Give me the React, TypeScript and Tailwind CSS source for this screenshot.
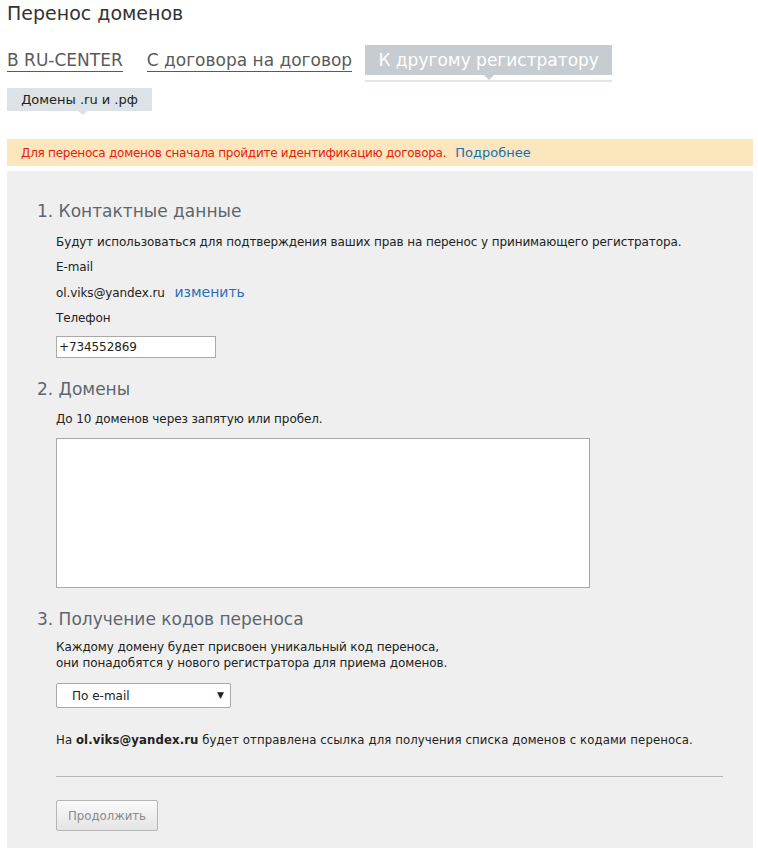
import React from "react";

export default function App() {
  const font = { fontFamily: '"DejaVu Sans", Verdana, sans-serif' };
  const cond = { fontFamily: '"DejaVu Sans Condensed", Tahoma, sans-serif' };
  return (
    <div className="min-h-[848px] bg-white text-[#222]" style={font}>
      <div className="pl-[7px] pr-[5px]">
        <h1 className="pt-[1px] text-[19px] leading-[24px] text-[#333]">Перенос доменов</h1>
        <div className="mt-[20px] flex items-start">
          <a className="mt-[5px] text-[17px] leading-[21px] text-[#5a5a5a] border-b border-[#5a5a5a]">В RU-CENTER</a>
          <a className="ml-[24px] mt-[5px] text-[17px] leading-[21px] text-[#5a5a5a] border-b border-[#5a5a5a]">С договора на договор</a>
          <div className="ml-[13px] flex flex-col">
            <div className="relative h-[30px] w-[247px] bg-[#c6ccd0] text-center text-[17px] leading-[30px] text-white">
              К другому регистратору
              <span className="absolute left-1/2 top-full -translate-x-1/2 h-0 w-0 border-x-[5px] border-t-[5px] border-x-transparent border-t-[#c6ccd0]" />
            </div>
            <div className="mt-[5px] h-[2px] w-[247px] bg-[#e1e6e8]" />
          </div>
        </div>
        <div className="relative mt-[6px] h-[23px] w-[145px] bg-[#dde2e6] text-center text-[13px] leading-[23px] text-[#222]">
          Домены .ru и .рф
          <span className="absolute left-[76px] top-full -translate-x-1/2 h-0 w-0 border-x-[5px] border-t-[4px] border-x-transparent border-t-[#dde2e6]" />
        </div>
        <div className="mt-[28px] h-[27px] bg-[#fbe6bd] pl-[14px] text-[12px] leading-[27px] text-[#e8200c]">
          <span className="tracking-[-0.25px]">Для переноса доменов сначала пройдите идентификацию договора.</span>
          <a className="ml-[9px] text-[13px] text-[#1570b8]">Подробнее</a>
        </div>
        <div className="mt-[5px] bg-[#efefef] pb-[20px] pl-[30px] pr-[30px] pt-[29px]">
          <h2 className="text-[17px] leading-[22px] text-[#5d6670]">1. Контактные данные</h2>
          <div className="pl-[19px] text-[12px] tracking-[-0.1px] text-[#222]">
            <p className="mt-[10px] leading-[20px]">Будут использоваться для подтверждения ваших прав на перенос у принимающего регистратора.</p>
            <p className="mt-[5px] leading-[20px]">E-mail</p>
            <p className="mt-[5px] leading-[20px]">
              ol.viks@yandex.ru <a className="ml-[6px] text-[14px] tracking-normal text-[#2a6fb5]">изменить</a>
            </p>
            <p className="mt-[5px] leading-[20px]">Телефон</p>
            <div className="mt-[8px] h-[22px] w-[160px] border border-[#a9a9a9] bg-white pl-[2px] text-[12px] leading-[20px]">+734552869</div>
          </div>
          <h2 className="mt-[20px] text-[17px] leading-[22px] text-[#5d6670]">2. Домены</h2>
          <div className="pl-[19px] text-[12px] tracking-[-0.1px] text-[#222]">
            <p className="mt-[9px] leading-[20px]">До 10 доменов через запятую или пробел.</p>
            <div className="mt-[9px] h-[150px] w-[534px] border border-[#a9a9a9] bg-white" />
          </div>
          <h2 className="mt-[20px] text-[17px] leading-[22px] text-[#5d6670]">3. Получение кодов переноса</h2>
          <div className="pl-[19px] text-[12px] text-[#222]">
            <p className="mt-[9px] leading-[16px] tracking-[-0.1px]">
              Каждому домену будет присвоен уникальный код переноса,
              <br />
              они понадобятся у нового регистратора для приема доменов.
            </p>
            <div className="mt-[12px] flex h-[25px] w-[175px] items-center justify-between rounded-[2px] border border-[#a9a9a9] bg-white pl-[15px] pr-[6px] text-[12px]">
              <span>По e-mail</span>
              <span className="text-[9px]">▼</span>
            </div>
            <p className="mt-[22px] text-[13px] leading-[20px] tracking-[0.1px]" style={cond}>
              На <b>ol.viks@yandex.ru</b> будет отправлена ссылка для получения списка доменов с кодами переноса.
            </p>
            <div className="mt-[26px] h-px bg-[#b8b8b8]" />
            <button
              className="mt-[23px] h-[31px] w-[102px] rounded-[2px] border border-[#b5b5b5] bg-gradient-to-b from-[#fafafa] to-[#e4e4e4] text-[13px] text-[#8a8a8a]"
              style={cond}
            >
              Продолжить
            </button>
          </div>
        </div>
      </div>
    </div>
  );
}
